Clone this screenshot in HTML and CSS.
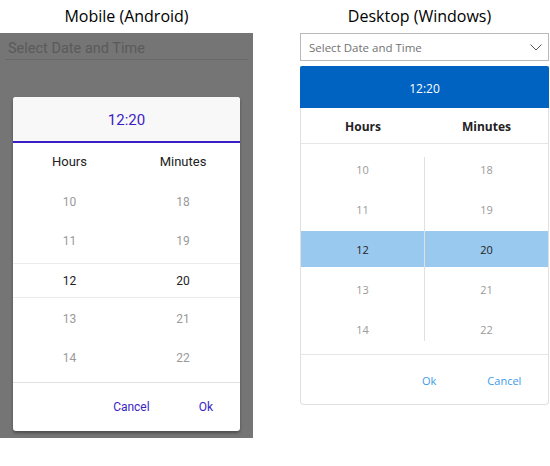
FILE: index.html
```html
<!DOCTYPE html>
<html>
<head>
<meta charset="utf-8">
<link rel="stylesheet" href="styles.css">
</head>
<body>
<div class="page">
  <section class="col col-mobile">
    <h2 class="title">Mobile (Android)</h2>
    <div class="m-screen">
      <div class="m-input">Select Date and Time</div>
      <div class="m-dialog">
        <div class="m-head">12:20</div>
        <div class="m-cols">
          <div class="m-col">
            <div class="m-label">Hours</div>
            <div class="m-cell">10</div>
            <div class="m-cell">11</div>
            <div class="m-cell m-sel">12</div>
            <div class="m-cell">13</div>
            <div class="m-cell">14</div>
          </div>
          <div class="m-col">
            <div class="m-label">Minutes</div>
            <div class="m-cell">18</div>
            <div class="m-cell">19</div>
            <div class="m-cell m-sel">20</div>
            <div class="m-cell">21</div>
            <div class="m-cell">22</div>
          </div>
        </div>
        <div class="m-foot">
          <span class="m-btn">Cancel</span>
          <span class="m-btn">Ok</span>
        </div>
      </div>
    </div>
  </section>
  <section class="col col-desk">
    <h2 class="title title-desk">Desktop (Windows)</h2>
    <div class="d-input">
      <span>Select Date and Time</span>
      <svg class="chev" width="12" height="7" viewBox="0 0 12 7"><path d="M0.5 0.5 L6 6 L11.5 0.5" fill="none" stroke="#555" stroke-width="1"/></svg>
    </div>
    <div class="d-pop">
      <div class="d-head">12:20</div>
      <div class="d-labels">
        <div class="d-label">Hours</div>
        <div class="d-label">Minutes</div>
      </div>
      <div class="d-cols">
        <div class="d-col">
          <div class="d-cell">10</div>
          <div class="d-cell">11</div>
          <div class="d-cell d-sel">12</div>
          <div class="d-cell">13</div>
          <div class="d-cell">14</div>
        </div>
        <div class="d-div"></div>
        <div class="d-col">
          <div class="d-cell">18</div>
          <div class="d-cell">19</div>
          <div class="d-cell d-sel">20</div>
          <div class="d-cell">21</div>
          <div class="d-cell">22</div>
        </div>
      </div>
      <div class="d-foot">
        <span class="d-btn d-ok">Ok</span>
        <span class="d-btn d-cancel">Cancel</span>
      </div>
    </div>
  </section>
</div>
</body>
</html>
```

FILE: styles.css
```css
html, body {
  margin: 0;
  padding: 0;
  background: #ffffff;
}
.page {
  display: flex;
  width: 550px;
  height: 466px;
}
.col {
  display: flex;
  flex-direction: column;
}
.col-mobile {
  width: 253px;
}
.col-desk {
  width: 249px;
  margin-left: 47px;
}
.title {
  margin: 0;
  height: 33px;
  font-family: "Open Sans", sans-serif;
  font-weight: 400;
  font-size: 16px;
  line-height: 33px;
  text-align: center;
  color: #000;
}
.title-desk {
  padding-right: 10px;
}

/* Mobile */
.m-screen {
  background: #757575;
  height: 405px;
  font-family: Roboto, sans-serif;
}
.m-input {
  margin: 0 5px;
  height: 26px;
  padding-left: 3px;
  border-bottom: 1px solid #696969;
  color: #5a5a5a;
  font-size: 14.5px;
  line-height: 31px;
}
.m-dialog {
  margin: 37px 0 0 13px;
  width: 227px;
  background: #fff;
  border-radius: 3px;
  box-shadow: 0 2px 3px rgba(0,0,0,0.35);
  overflow: hidden;
}
.m-head {
  height: 44px;
  background: #f8f8f8;
  border-bottom: 2px solid #3a1ec4;
  color: #3a1ec4;
  font-size: 15px;
  line-height: 47px;
  text-align: center;
}
.m-cols {
  display: grid;
  grid-template-columns: 113px 114px;
  padding-bottom: 5px;
  border-bottom: 1px solid #e2e2e2;
}
.m-col {
  display: flex;
  flex-direction: column;
}
.m-label {
  height: 39px;
  display: flex;
  align-items: center;
  justify-content: center;
  padding-bottom: 3px;
  box-sizing: border-box;
  font-size: 13px;
  color: #222;
}
.m-cell {
  height: 39px;
  display: flex;
  align-items: center;
  justify-content: center;
  font-size: 12px;
  color: #9a9a9a;
}
.m-sel {
  height: 33px;
  margin: 3px 0 1px;
  border-top: 1px solid #ececec;
  border-bottom: 1px solid #ececec;
  color: #222;
}
.m-foot {
  height: 48px;
  display: flex;
  justify-content: flex-end;
  align-items: center;
  gap: 49px;
  padding-right: 27px;
}
.m-btn {
  font-size: 12px;
  color: #3a1ec4;
}

/* Desktop */
.d-input {
  height: 26px;
  border: 1px solid #b9b9b9;
  display: flex;
  align-items: center;
  justify-content: space-between;
  padding: 0 6px 0 8px;
  font-family: "Open Sans", sans-serif;
  font-size: 11.5px;
  color: #727272;
}
.chev {
  display: block;
}
.d-pop {
  margin-top: 5px;
  border: 1px solid #e0e0e0;
  border-top: none;
  border-radius: 0 0 4px 4px;
  font-family: "Open Sans", sans-serif;
  background: #fff;
}
.d-head {
  height: 42px;
  margin: 0 -1px;
  background: #0062c1;
  color: #fff;
  font-size: 12px;
  line-height: 45px;
  text-align: center;
  border-radius: 2px 2px 0 0;
}
.d-labels {
  display: grid;
  grid-template-columns: 124px 1fr;
  height: 36px;
  padding-top: 1px;
  box-sizing: border-box;
  border-bottom: 1px solid #e6e6e6;
}
.d-label {
  display: flex;
  align-items: center;
  justify-content: center;
  font-size: 12px;
  font-weight: 700;
  color: #222;
}
.d-cols {
  display: grid;
  grid-template-columns: 123px 1px 1fr;
  padding: 5px 0;
  border-bottom: 1px solid #e6e6e6;
}
.d-div {
  background: #e0e0e0;
  margin: 8px 0;
}
.d-col {
  display: flex;
  flex-direction: column;
}
.d-cell {
  height: 40px;
  display: flex;
  align-items: center;
  justify-content: center;
  font-size: 11px;
  color: #9a9a9a;
}
.d-sel {
  height: 36px;
  margin: 2px 0;
  background: #99c9ee;
  color: #222;
}
.d-foot {
  height: 49px;
  display: flex;
  align-items: center;
  padding-top: 2px;
  box-sizing: border-box;
  font-size: 11px;
}
.d-btn {
  color: #3d9be9;
}
.d-ok {
  margin-left: 121px;
}
.d-cancel {
  margin-left: 51px;
}
```
